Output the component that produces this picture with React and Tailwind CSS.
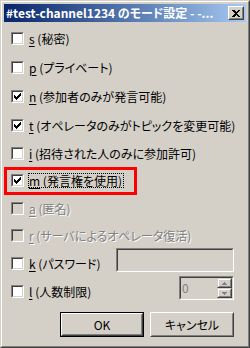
import React from "react";

function Check({ color = "#000" }) {
  const cols = [2, 3, 4, 3, 2, 1, 0];
  return (
    <svg width="7" height="7" viewBox="0 0 7 7" shapeRendering="crispEdges">
      {cols.map((y, x) => (
        <rect key={x} x={x} y={y} width="1" height="3" fill={color} />
      ))}
    </svg>
  );
}

function CheckBox({ checked, disabled }) {
  return (
    <div className="w-[13px] h-[13px] shrink-0 border border-t-[#808080] border-l-[#808080] border-b-white border-r-white">
      <div
        className={
          "w-full h-full border border-t-[#404040] border-l-[#404040] border-b-[#d4d0c8] border-r-[#d4d0c8] flex items-center justify-center " +
          (disabled ? "bg-[#d4d0c8]" : "bg-white")
        }
      >
        {checked && <Check />}
      </div>
    </div>
  );
}

function Label({ k, text, disabled, focused }) {
  return (
    <div
      className={
        "ml-[4px] pr-[1px] border leading-[13px] text-[12px] whitespace-nowrap [font-feature-settings:'palt'] " +
        (focused ? "border-dotted border-black" : "border-transparent") +
        (disabled ? " text-[#808080] [text-shadow:1px_1px_0_#fff]" : " text-black")
      }
    >
      <span className="underline underline-offset-2">{k}</span> {text}
    </div>
  );
}

const rows = [
  { k: "s", text: "(秘密)", mt: "mt-[10px]" },
  { k: "p", text: "(プライベート)", mt: "mt-[16px]" },
  { k: "n", text: "(参加者のみが発言可能)", mt: "mt-[16px]", checked: true },
  { k: "t", text: "(オペレータのみがトピックを変更可能)", mt: "mt-[16px]", checked: true },
  { k: "i", text: "(招待された人のみに参加許可)", mt: "mt-[15px]" },
  { k: "m", text: "(発言権を使用)", mt: "mt-[14px]", checked: true, focused: true },
  { k: "a", text: "(匿名)", mt: "mt-[15px]", disabled: true },
  { k: "r", text: "(サーバによるオペレータ復活)", mt: "mt-[14px]", disabled: true },
];

function Sunken({ className, children }) {
  return (
    <div className={"border border-t-[#808080] border-l-[#808080] border-b-white border-r-white " + className}>
      <div className="w-full h-full border border-t-[#404040] border-l-[#404040] border-b-[#d4d0c8] border-r-[#d4d0c8] bg-[#d4d0c8] flex">
        {children}
      </div>
    </div>
  );
}

function Arrow({ up }) {
  return (
    <svg width="5" height="3" viewBox="0 0 5 3" shapeRendering="crispEdges">
      {up ? (
        <>
          <rect x="2" y="0" width="1" height="1" fill="#808080" />
          <rect x="1" y="1" width="3" height="1" fill="#808080" />
          <rect x="0" y="2" width="5" height="1" fill="#808080" />
        </>
      ) : (
        <>
          <rect x="0" y="0" width="5" height="1" fill="#808080" />
          <rect x="1" y="1" width="3" height="1" fill="#808080" />
          <rect x="2" y="2" width="1" height="1" fill="#808080" />
        </>
      )}
    </svg>
  );
}

function SpinBtn({ up }) {
  return (
    <div className="h-[10px] w-full border border-t-[#d4d0c8] border-l-[#d4d0c8] border-b-[#404040] border-r-[#404040]">
      <div className="w-full h-full border border-t-white border-l-white border-b-[#808080] border-r-[#808080] flex items-center justify-center">
        <Arrow up={up} />
      </div>
    </div>
  );
}

function Button({ children, isDefault }) {
  const inner = (
    <div className="w-full h-full border border-t-white border-l-white border-b-[#404040] border-r-[#404040]">
      <div className="w-full h-full border border-t-[#d4d0c8] border-l-[#d4d0c8] border-b-[#808080] border-r-[#808080] flex items-center justify-center text-[12px] text-black [font-feature-settings:'palt']">
        {children}
      </div>
    </div>
  );
  return (
    <div className={"w-[84px] h-[25px] " + (isDefault ? "border border-black" : "")}>{inner}</div>
  );
}

export default function App() {
  return (
    <div className="w-[250px] h-[348px] bg-[#d4d0c8] border border-t-[#d4d0c8] border-l-[#d4d0c8] border-b-[#404040] border-r-[#404040] font-['Noto_Sans_CJK_JP','Noto_Sans',sans-serif] overflow-hidden">
      <div className="w-full h-full border border-t-white border-l-white border-b-[#808080] border-r-[#808080] p-[2px] flex flex-col">
        <div className="h-[18px] shrink-0 bg-linear-to-r from-[#0a246a] to-[#a6caf0] flex items-center pl-[2px] pr-[2px]">
          <div className="flex-1 min-w-0 overflow-hidden whitespace-nowrap text-white font-bold text-[12px] leading-[18px] [font-feature-settings:'palt']">
            #test-channel1234 のモード設定 - -...
          </div>
          <div className="w-[16px] h-[14px] shrink-0 ml-[2px] border border-t-white border-l-white border-b-[#404040] border-r-[#404040]">
            <div className="w-full h-full bg-[#d4d0c8] border border-t-[#d4d0c8] border-l-[#d4d0c8] border-b-[#808080] border-r-[#808080] flex items-center justify-center">
              <svg width="8" height="7" viewBox="0 0 8 7" shapeRendering="crispEdges">
                <path d="M0 0h2l2 2 2-2h2L5 3.5 8 7H6L4 5 2 7H0l3-3.5z" fill="#000" />
              </svg>
            </div>
          </div>
        </div>

        <div className="flex-1 flex flex-col pl-[7px] pr-[12px]">
          {rows.map((r) => (
            <div key={r.k} className={"relative flex items-center h-[13px] " + r.mt}>
              {r.focused && (
                <div className="absolute -left-[7px] -top-[7px] w-[133px] h-[28px] border-[3px] border-[#ff0000] pointer-events-none" />
              )}
              <CheckBox checked={r.checked} disabled={r.disabled} />
              <Label k={r.k} text={r.text} disabled={r.disabled} focused={r.focused} />
            </div>
          ))}

          <div className="flex items-end mt-[6px] h-[24px]">
            <div className="flex items-center mb-[1px]">
              <CheckBox />
              <Label k="k" text="(パスワード)" />
            </div>
            <div className="flex-1" />
            <Sunken className="w-[118px] h-[24px]" />
          </div>

          <div className="flex items-end mt-[4px] h-[24px]">
            <div className="flex items-center mb-[1px]">
              <CheckBox />
              <Label k="l" text="(人数制限)" />
            </div>
            <div className="flex-1" />
            <Sunken className="w-[55px] h-[24px]">
              <div className="flex-1 pl-[1px] text-[12px] leading-[20px] text-[#808080]">0</div>
              <div className="w-[15px] flex flex-col">
                <SpinBtn up />
                <SpinBtn />
              </div>
            </Sunken>
          </div>

          <div className="flex justify-end gap-[6px] mt-[12px]">
            <Button isDefault>OK</Button>
            <Button>キャンセル</Button>
          </div>
        </div>
      </div>
    </div>
  );
}
